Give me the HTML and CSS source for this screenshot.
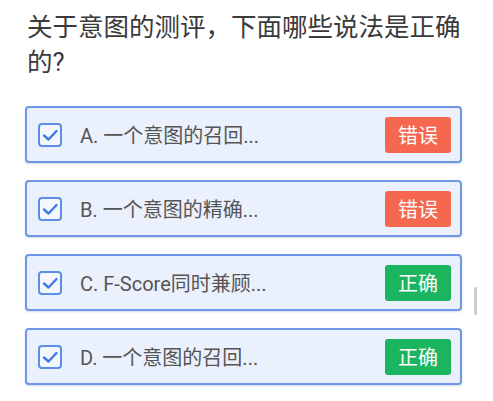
FILE: index.html
```html
<!DOCTYPE html>
<html lang="zh">
<head>
<meta charset="utf-8">
<link rel="stylesheet" href="styles.css">
</head>
<body>
<div class="page">
  <h1 class="title">关于意图的测评，下面哪些说法是正确的?</h1>
  <ul class="options">
    <li class="option">
      <svg class="check" viewBox="0 0 24 24"><rect x="1" y="1" width="22" height="22" rx="3"/><path d="M6 12.5 L10.5 16.5 L18.5 8"/></svg>
      <span class="label">A. 一个意图的召回...</span>
      <span class="badge wrong">错误</span>
    </li>
    <li class="option">
      <svg class="check" viewBox="0 0 24 24"><rect x="1" y="1" width="22" height="22" rx="3"/><path d="M6 12.5 L10.5 16.5 L18.5 8"/></svg>
      <span class="label">B. 一个意图的精确...</span>
      <span class="badge wrong">错误</span>
    </li>
    <li class="option">
      <svg class="check" viewBox="0 0 24 24"><rect x="1" y="1" width="22" height="22" rx="3"/><path d="M6 12.5 L10.5 16.5 L18.5 8"/></svg>
      <span class="label">C. F-Score同时兼顾...</span>
      <span class="badge right">正确</span>
    </li>
    <li class="option">
      <svg class="check" viewBox="0 0 24 24"><rect x="1" y="1" width="22" height="22" rx="3"/><path d="M6 12.5 L10.5 16.5 L18.5 8"/></svg>
      <span class="label">D. 一个意图的召回...</span>
      <span class="badge right">正确</span>
    </li>
  </ul>
  <div class="scroll-thumb"></div>
</div>
</body>
</html>
```

FILE: styles.css
```css
* { box-sizing: border-box; }
html, body {
  margin: 0;
  padding: 0;
  background: #ffffff;
}
body {
  font-family: Roboto, "Noto Sans CJK SC", sans-serif;
  width: 493px;
  height: 401px;
  overflow: hidden;
}
.page {
  position: relative;
  padding: 10px 0 0 25px;
  width: 462px;
}
.title {
  margin: 0;
  padding-left: 2px;
  font-size: 25.5px;
  line-height: 35px;
  font-weight: 400;
  color: #3a3a3a;
}
.options {
  list-style: none;
  margin: 26px 0 0 0;
  padding: 0;
  display: flex;
  flex-direction: column;
  gap: 17px;
}
.option {
  height: 57px;
  display: flex;
  align-items: center;
  padding: 0 9px 0 11px;
  background: #eaf0fc;
  border: 2px solid #6f97e6;
  border-radius: 4px;
  box-shadow: 0 1px 2px rgba(80, 110, 170, 0.25);
}
.check {
  width: 24px;
  height: 24px;
  flex: none;
}
.check rect {
  fill: #f4f7fe;
  stroke: #5a8ee9;
  stroke-width: 2;
}
.check path {
  fill: none;
  stroke: #3f7be6;
  stroke-width: 2.4;
  stroke-linecap: round;
  stroke-linejoin: round;
}
.label {
  flex: 1;
  margin-left: 18px;
  font-size: 20px;
  color: #555555;
  white-space: nowrap;
}
.badge {
  flex: none;
  width: 66px;
  height: 36px;
  display: flex;
  align-items: center;
  justify-content: center;
  border-radius: 3px;
  color: #ffffff;
  font-size: 20px;
}
.badge.wrong { background: #f5674e; }
.badge.right { background: #1bb55f; }
.scroll-thumb {
  position: absolute;
  left: 474px;
  top: 287px;
  width: 3px;
  height: 28px;
  background: #cccccc;
  border-radius: 1px;
}
```
